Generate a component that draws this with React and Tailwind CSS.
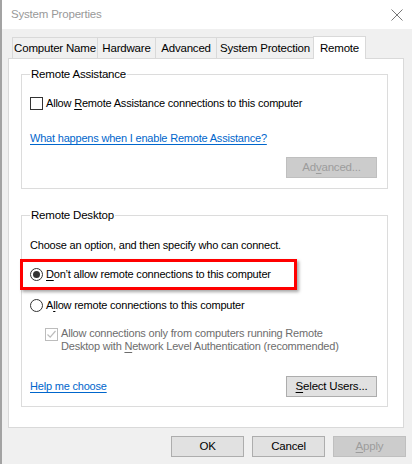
import React from 'react';

const font = { fontFamily: '"Liberation Sans", Arial, sans-serif' };

function Key({ children }) {
  return <span className="underline underline-offset-2 decoration-1">{children}</span>;
}

function Checkbox({ checked, disabled }) {
  return (
    <span
      className={
        'flex h-[13px] w-[13px] shrink-0 items-center justify-center border bg-white ' +
        (disabled ? 'border-[#bcbcbc]' : 'border-[#333333]')
      }
    >
      {checked && (
        <svg width="11" height="11" viewBox="0 0 11 11">
          <path d="M1.5 5.5 L4.2 8.2 L9.5 2" fill="none" stroke={disabled ? '#bcbcbc' : '#333'} strokeWidth="1.2" />
        </svg>
      )}
    </span>
  );
}

function Radio({ checked }) {
  return (
    <span className="flex h-[13px] w-[13px] shrink-0 items-center justify-center rounded-full border border-[#333333] bg-white">
      {checked && <span className="h-[7px] w-[7px] rounded-full bg-[#333333]" />}
    </span>
  );
}

function Button({ children, disabled, className = '' }) {
  return (
    <button
      type="button"
      className={
        'flex h-[21px] items-center justify-center whitespace-nowrap border text-[11.5px] leading-none ' +
        (disabled
          ? 'border-[#bfbfbf] bg-[#cccccc] text-[#9c9c9c] '
          : 'border-[#adadad] bg-[#e1e1e1] text-black ') +
        className
      }
    >
      {children}
    </button>
  );
}

function Group({ title, children, className = '' }) {
  return (
    <fieldset className={'w-[367px] border border-[#dcdcdc] pl-[8px] pr-[10px] ' + className}>
      <legend className="whitespace-nowrap px-[1px] text-[11.5px] leading-[16px]">{title}</legend>
      {children}
    </fieldset>
  );
}

const tabs = [
  { label: 'Computer Name', w: 'w-[86px]' },
  { label: 'Hardware', w: 'w-[59px]' },
  { label: 'Advanced', w: 'w-[62px]' },
  { label: 'System Protection', w: 'w-[98px]' },
];

export default function App() {
  return (
    <div
      className="flex h-[464px] w-[412px] flex-col overflow-hidden border-l-2 border-[#a3a3a3] bg-[#f0f0f0] text-[11px] tracking-[-0.2px] text-black"
      style={font}
    >
      <div className="flex h-[29px] shrink-0 items-center justify-between bg-white pl-[9px] pr-[9px]">
        <span className="whitespace-nowrap text-[11.5px] text-[#999999]">System Properties</span>
        <svg width="12" height="12" viewBox="0 0 12 12">
          <path d="M0.5 0.5 L11.5 11.5 M11.5 0.5 L0.5 11.5" stroke="#777" strokeWidth="1" />
        </svg>
      </div>

      <div className="mt-[7px] flex h-[22px] items-end pl-[10px]">
        {tabs.map((t, i) => (
          <div
            key={t.label}
            className={
              'flex h-[21px] items-center justify-center whitespace-nowrap border border-b-0 border-[#d9d9d9] bg-[#f0f0f0] pt-[1px] text-[11.5px] ' +
              t.w +
              (i > 0 ? ' -ml-px' : '')
            }
          >
            {t.label}
          </div>
        ))}
        <div className="relative z-10 -mb-px -ml-px flex h-[23px] w-[53px] items-start justify-center whitespace-nowrap border border-b-0 border-[#d9d9d9] bg-white pt-[3px] text-[11.5px]">
          Remote
        </div>
      </div>

      <div className="ml-[6px] flex h-[370px] w-[396px] flex-col border border-[#d9d9d9] bg-white pl-[12px]">
        <Group title="Remote Assistance" className="mt-[7px] pb-[10px]">
          <div className="mt-[13px] flex h-[16px] items-center gap-[3px] whitespace-nowrap">
            <Checkbox />
            <span>
              Allow <Key>R</Key>emote Assistance connections to this computer
            </span>
          </div>
          <div className="mt-[19px] h-[16px] whitespace-nowrap leading-[16px]">
            <a className="text-[#0066cc] underline underline-offset-2 decoration-1">
              What happens when I enable Remote Assistance?
            </a>
          </div>
          <div className="mt-[11px] flex justify-end">
            <Button disabled className="w-[91px]">
              Ad<Key>v</Key>anced...
            </Button>
          </div>
        </Group>

        <Group title="Remote Desktop" className="mt-[18px] pb-[9px]">
          <div className="mt-[14px] h-[16px] whitespace-nowrap leading-[16px]">
            Choose an option, and then specify who can connect.
          </div>
          <div className="-ml-[10px] mt-[6px] flex h-[31px] w-[277px] items-center gap-[3px] whitespace-nowrap border-[3px] border-[#ff0000] pl-[7px] shadow-[2px_2px_3px_rgba(0,0,0,0.35)]">
            <Radio checked />
            <span>
              <Key>D</Key>on’t allow remote connections to this computer
            </span>
          </div>
          <div className="mt-[7px] flex h-[16px] items-center gap-[3px] whitespace-nowrap">
            <Radio />
            <span>
              A<Key>l</Key>low remote connections to this computer
            </span>
          </div>
          <div className="mt-[14px] flex gap-[3px] whitespace-nowrap pl-[15px] leading-[13px] text-[#6d6d6d]">
            <div className="pt-[1px]">
              <Checkbox checked disabled />
            </div>
            <span>
              Allow connections only from computers running Remote
              <br />
              Desktop with <Key>N</Key>etwork Level Authentication (recommended)
            </span>
          </div>
          <div className="mt-[23px] flex items-center justify-between">
            <a className="whitespace-nowrap text-[#0066cc] underline underline-offset-2 decoration-1">Help me choose</a>
            <Button className="w-[91px]">
              <Key>S</Key>elect Users...
            </Button>
          </div>
        </Group>
      </div>

      <div className="mt-[8px] flex justify-end gap-[8px] pr-[6px]">
        <Button className="w-[73px]">OK</Button>
        <Button className="w-[73px]">Cancel</Button>
        <Button disabled className="w-[73px]">
          <Key>A</Key>pply
        </Button>
      </div>
    </div>
  );
}
